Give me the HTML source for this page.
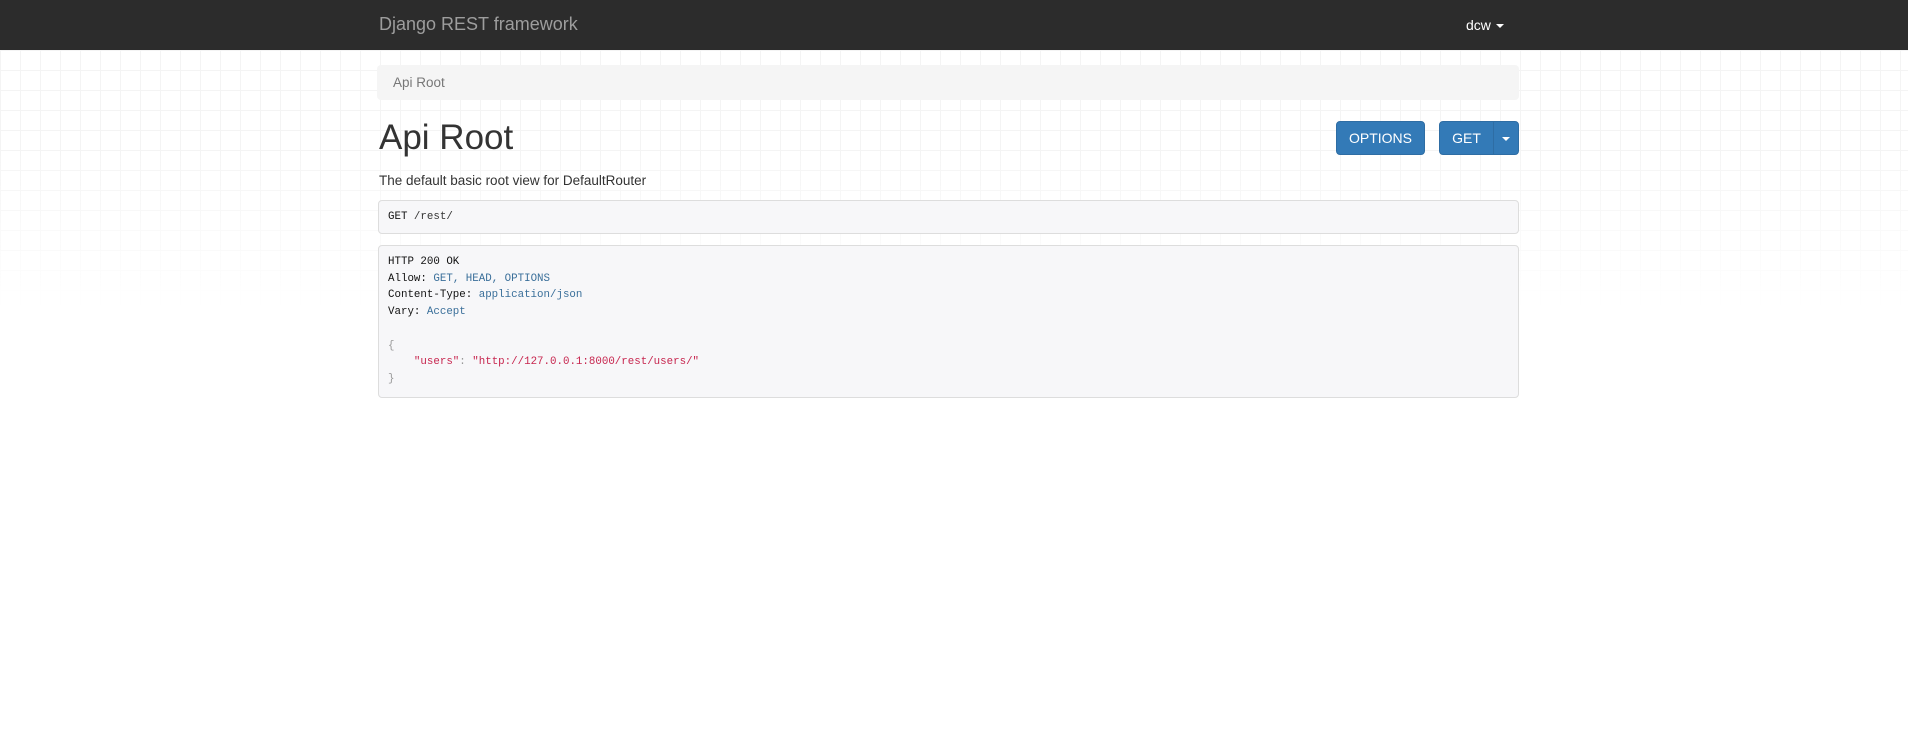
<!DOCTYPE html>
<html><head><meta charset="utf-8"><style>
*{box-sizing:border-box}
body{margin:0;width:1908px;height:749px;background:#fff;font-family:"Liberation Sans",Arial,sans-serif;color:#333;position:relative;overflow:hidden}
.grid{position:absolute;left:0;top:50px;width:1908px;height:260px;
background-image:linear-gradient(#eee 1px,transparent 1px),linear-gradient(90deg,#eee 1px,transparent 1px);
background-size:20px 20px;-webkit-mask-image:linear-gradient(#000 40%,transparent);mask-image:linear-gradient(#000 40%,transparent);opacity:.6}
.nav{position:absolute;left:0;top:0;width:1908px;height:50px;background:#2c2c2c}
.brand{position:absolute;left:379px;top:14px;font-size:18px;color:#9d9d9d}
.user{position:absolute;left:1466px;top:17px;font-size:14px;color:#fff}
.caret{display:inline-block;width:0;height:0;border-left:4px solid transparent;border-right:4px solid transparent;border-top:4px solid;vertical-align:middle;margin-left:5px}
.bc{position:absolute;left:377px;top:65px;width:1142px;height:35px;background:#f5f5f5;border-radius:4px;padding:10px 16px;font-size:13.5px;color:#777}
h1{position:absolute;left:379px;top:118px;margin:0;font-size:35px;font-weight:normal;color:#333}
.desc{position:absolute;left:379px;top:173px;font-size:13.5px}
.btn{position:absolute;top:121px;height:34px;background:#337ab7;border:1px solid #2e6da4;border-radius:4px;color:#fff;font-size:14px;line-height:32px;text-align:center}
.pre{position:absolute;left:378px;width:1141px;background:#f7f7f9;border:1px solid #ddd;border-radius:4px;font-family:"Liberation Mono",monospace;font-size:10.8px;color:#333;padding:8px 9px;line-height:16.7px;white-space:pre}
.b{color:#111}.v{color:#3a6f9a}.s{color:#c7254e}.p{color:#999}
</style></head><body>
<div class="grid"></div>
<div class="nav"><div class="brand">Django REST framework</div><div class="user">dcw<span class="caret"></span></div></div>
<div class="bc">Api Root</div>
<h1>Api Root</h1>
<div class="desc">The default basic root view for DefaultRouter</div>
<div class="btn" style="left:1336px;width:89px">OPTIONS</div>
<div class="btn" style="left:1439px;width:55px;border-radius:4px 0 0 4px">GET</div>
<div class="btn" style="left:1493px;width:26px;border-radius:0 4px 4px 0"><span class="caret" style="margin:0"></span></div>
<div class="pre" style="top:200px;height:34px;padding-top:8px"><span class="b">GET</span> /rest/</div>
<div class="pre" style="top:245px;height:153px"><span class="b">HTTP 200 OK</span>
<span class="b">Allow:</span> <span class="v">GET, HEAD, OPTIONS</span>
<span class="b">Content-Type:</span> <span class="v">application/json</span>
<span class="b">Vary:</span> <span class="v">Accept</span>

<span class="p">{</span>
    <span class="s">"users"</span><span class="p">:</span> <span class="s">"http://127.0.0.1:8000/rest/users/"</span>
<span class="p">}</span></div>
</body></html>
